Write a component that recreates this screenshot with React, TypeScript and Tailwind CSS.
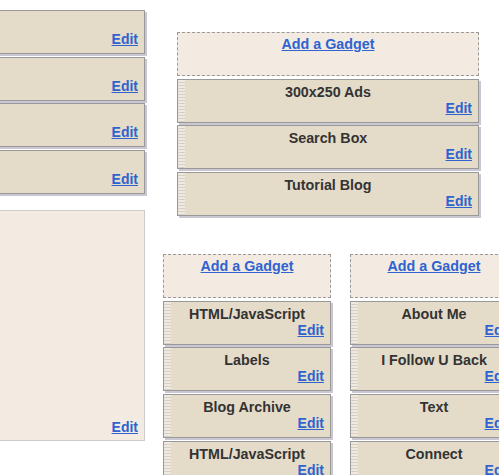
import React from "react";

const font = { fontFamily: '"Liberation Sans", Arial, sans-serif' };

function EditLink() {
  return (
    <div className="h-[16px] text-right text-[14px] leading-[16px]">
      <a href="#" className="font-bold text-[#2f63d0] underline">
        Edit
      </a>
    </div>
  );
}

function Widget({ title, grip = true }: { title?: string; grip?: boolean }) {
  return (
    <div className="relative h-[44px] shrink-0 border border-[#999] bg-[#e5dbc9] shadow-[2px_2px_0_#cac6d2]">
      {grip && (
        <div className="absolute left-0 top-0 h-full w-[7px] bg-[repeating-linear-gradient(0deg,#d6cfc3_0px,#d6cfc3_1px,#efe9e0_1px,#efe9e0_3px)]" />
      )}
      <div className="pt-[5px] pr-[6px]">
        <div className="h-[15px] pl-[6px] text-center text-[14.3px] font-bold leading-[15px] text-[#333]">
          {title}
        </div>
        <EditLink />
      </div>
    </div>
  );
}

function AddGadget() {
  return (
    <div className="h-[44px] shrink-0 border border-dashed border-[#999] bg-[#f3ebe2] pt-[3px] text-center text-[14.3px] leading-[16px]">
      <a href="#" className="font-bold text-[#2f63d0] underline">
        Add a Gadget
      </a>
    </div>
  );
}

function Column({ items, className }: { items: string[]; className: string }) {
  return (
    <div className={`flex shrink-0 flex-col gap-[2.67px] ${className}`}>
      <AddGadget />
      {items.map((t, i) => (
        <Widget key={i} title={t} />
      ))}
    </div>
  );
}

export default function App() {
  return (
    <div className="h-[475px] w-[499px] overflow-hidden bg-white" style={font}>
      <div className="flex">
        {/* main column */}
        <div className="ml-[-30px] flex w-[175px] shrink-0 flex-col pt-[10px]">
          <div className="flex flex-col gap-[2.67px]">
            <Widget grip={false} />
            <Widget grip={false} />
            <Widget grip={false} />
            <Widget grip={false} />
          </div>
          <div className="mt-[16px] flex h-[231px] flex-col justify-end border border-[#ccc] bg-[#f3ebe2] pb-[5px] pr-[6px]">
            <EditLink />
          </div>
        </div>

        {/* sidebar + footer columns */}
        <div className="flex flex-col pl-[18px]">
          <Column
            className="ml-[14px] mt-[32px] w-[302px]"
            items={["300x250 Ads", "Search Box", "Tutorial Blog"]}
          />
          <div className="mt-[38px] flex gap-[19px]">
            <Column
              className="w-[168px]"
              items={["HTML/JavaScript", "Labels", "Blog Archive", "HTML/JavaScript"]}
            />
            <Column
              className="w-[168px]"
              items={["About Me", "I Follow U Back", "Text", "Connect"]}
            />
          </div>
        </div>
      </div>
    </div>
  );
}
